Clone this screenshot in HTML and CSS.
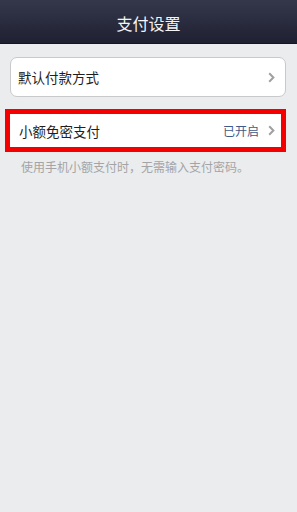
FILE: index.html
```html
<!DOCTYPE html>
<html lang="zh">
<head>
<meta charset="utf-8">
<link rel="stylesheet" href="styles.css">
</head>
<body>
<header class="nav">支付设置</header>
<main class="content">
  <div class="card">
    <span class="label">默认付款方式</span>
    <svg class="chev" width="7" height="11" viewBox="0 0 7 11"><path d="M1.2 1.2 L5.4 5.5 L1.2 9.8" fill="none" stroke="#a0a0a0" stroke-width="2"/></svg>
  </div>
  <div class="highlight">
    <div class="row">
      <span class="label">小额免密支付</span>
      <span class="status">已开启</span>
      <svg class="chev" width="7" height="11" viewBox="0 0 7 11"><path d="M1.2 1.2 L5.4 5.5 L1.2 9.8" fill="none" stroke="#a0a0a0" stroke-width="2"/></svg>
    </div>
  </div>
  <p class="hint">使用手机小额支付时，无需输入支付密码。</p>
</main>
</body>
</html>
```
FILE: styles.css
```css
html, body {
  margin: 0;
  padding: 0;
  height: 100%;
}
body {
  background: #ebecee;
  font-family: "Noto Sans CJK SC", "Noto Sans", sans-serif;
  color: #222;
}
.nav {
  height: 44px;
  box-sizing: border-box;
  padding-top: 2px;
  display: flex;
  align-items: center;
  justify-content: center;
  background: linear-gradient(#35374a, #1f2133);
  color: #f4f4f6;
  font-size: 16px;
  border-bottom: 1px solid #15161f;
}
.content {
  display: flex;
  flex-direction: column;
}
.card {
  margin: 13px 11px 0 10px;
  height: 40px;
  box-sizing: border-box;
  background: #fff;
  border: 1px solid #c9c9cb;
  border-radius: 7px;
  display: flex;
  align-items: center;
  padding: 0 10px 0 7px;
}
.label {
  font-size: 13.5px;
  flex: 1;
  color: #1e1e1e;
}
.chev {
  display: block;
}
.highlight {
  margin: 12px 11px 0 5px;
  border: 5px solid #f50000;
  background: #fff;
}
.row {
  height: 33px;
  display: flex;
  align-items: center;
  padding: 0 6px 0 9px;
}
.status {
  font-size: 12px;
  color: #3f5a8a;
  margin-right: 9px;
}
.hint {
  margin: 6px 0 0 21px;
  font-size: 12px;
  color: #a4a4a6;
}
```
